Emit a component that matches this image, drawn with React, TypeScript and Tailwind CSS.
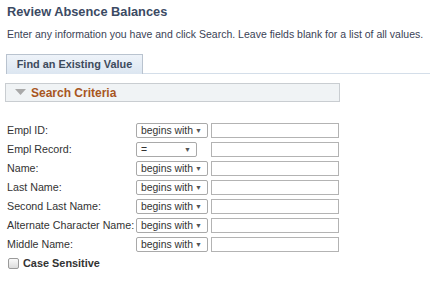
const fields = [
  { label: "Empl ID:", op: "begins with", narrow: false },
  { label: "Empl Record:", op: "=", narrow: true },
  { label: "Name:", op: "begins with", narrow: false },
  { label: "Last Name:", op: "begins with", narrow: false },
  { label: "Second Last Name:", op: "begins with", narrow: false },
  { label: "Alternate Character Name:", op: "begins with", narrow: false },
  { label: "Middle Name:", op: "begins with", narrow: false },
];

function OpSelect({ op, narrow }: { op: string; narrow: boolean }) {
  return (
    <div
      className={`${narrow ? "w-[61px]" : "w-[72px]"} h-[15px] flex items-center justify-between border border-[#a9a9a9] rounded-[2px] bg-white pl-[4px] pr-[5px] text-[10.4px] leading-[13px] whitespace-nowrap text-[#333]`}
    >
      <span>{op}</span>
      <span className="text-[7px] text-[#555]">▼</span>
    </div>
  );
}

export default function App() {
  return (
    <div className="w-[436px] h-[296px] bg-white font-['Liberation_Sans',Arial,sans-serif] text-[#333]">
      <h1 className="pt-[4px] pl-[7px] text-[12.8px] leading-[16px] font-bold text-[#3b4a63] whitespace-nowrap">
        Review Absence Balances
      </h1>
      <p className="mt-[7px] pl-[7px] text-[10.5px] leading-[14px] text-[#3a4255] whitespace-nowrap">
        Enter any information you have and click Search. Leave fields blank for a list of all values.
      </p>

      <div className="mt-[13px] ml-[6px] mr-[6px] flex items-end h-[20px]">
        <div className="h-[20px] w-[137px] flex items-center justify-center border border-b-0 border-[#b9c3cf] bg-gradient-to-b from-[#eef3f9] to-[#dce6f1] text-[10.9px] font-bold text-[#3d4a5c] whitespace-nowrap">
          Find an Existing Value
        </div>
        <div className="flex-1 border-b border-[#d4dee9]"></div>
      </div>

      <div className="mt-[9px] ml-[5px] w-[335px] h-[19px] flex items-center border border-[#c9cdd1] bg-[#f0f3f5]">
        <svg width="11" height="7" viewBox="0 0 11 7" className="ml-[9px]">
          <polygon points="0,0 11,0 5.5,6" fill="#a9a9a9" />
        </svg>
        <span className="ml-[5px] text-[12px] font-bold text-[#a8561f] whitespace-nowrap">Search Criteria</span>
      </div>

      <div className="mt-[19px] pl-[7px]">
        {fields.map((f) => (
          <div key={f.label} className="h-[19px] flex items-center">
            <div className="w-[129px] text-[10.7px] whitespace-nowrap text-[#333]">{f.label}</div>
            <div className="w-[75px]">
              <OpSelect op={f.op} narrow={f.narrow} />
            </div>
            <div className="w-[128px] h-[15px] border border-[#b3b3b3] bg-white"></div>
          </div>
        ))}
        <div className="h-[19px] flex items-center">
          <div className="ml-[1px] w-[11px] h-[11px] rounded-[2px] border border-[#9a9a9a] bg-gradient-to-b from-[#fafafa] to-[#dcdcdc]"></div>
          <span className="ml-[4px] text-[10.9px] font-bold text-[#333] whitespace-nowrap">Case Sensitive</span>
        </div>
      </div>
    </div>
  );
}
